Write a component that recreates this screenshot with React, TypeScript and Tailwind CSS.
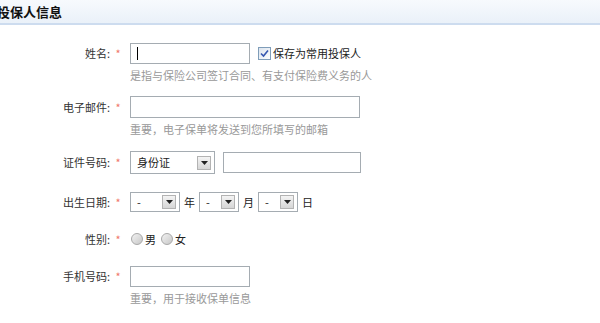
import React from "react";

const font = "font-['SimSun','Noto_Sans_CJK_SC',sans-serif]";

interface RowProps {
    label: string;
    hClass: string;
    hint?: string;
    className?: string;
    children: React.ReactNode;
}

function Row({ label, hClass, hint, className, children }: RowProps) {
    return (
        <div className={`flex ${className ?? ""}`}>
            <div className={`w-[110px] ${hClass} flex items-center justify-end text-[#333]`}>{label}:</div>
            <div className={`w-[16px] ${hClass} flex items-center justify-center text-[#f0776a] text-[11px]`}>*</div>
            <div className="ml-[4px]">
                <div className={`${hClass} flex items-center`}>{children}</div>
                {hint && <div className="mt-[3px] h-[16px] leading-[16px] text-[#999]">{hint}</div>}
            </div>
        </div>
    );
}

function Select({ value, w }: { value: string; w: string }) {
    return (
        <div className={`${w} h-full border border-[#a5acb2] bg-white flex items-center justify-between pl-[6px] pr-[3px]`}>
            <span className="text-[#222]">{value}</span>
            <span className="w-[14px] h-[14px] border border-[#b3b3b3] bg-gradient-to-b from-[#f4f4f4] to-[#d6d6d6] flex items-center justify-center">
                <svg width="7" height="4" viewBox="0 0 7 4">
                    <path d="M0 0h7L3.5 4z" fill="#222" />
                </svg>
            </span>
        </div>
    );
}

function Radio() {
    return (
        <span className="w-[12px] h-[12px] rounded-full border border-[#a8a8a8] bg-gradient-to-br from-[#f2f2f2] to-[#c8c8c8] inline-block" />
    );
}

export default function App() {
    return (
        <div className={`w-[600px] h-[323px] bg-white overflow-hidden text-[11px] ${font}`}>
            {/* Header */}
            <div className="h-[25px] bg-gradient-to-b from-[#f7fafd] to-[#eaf1f9] border-b-2 border-[#cddcef] flex items-center">
                <h2 className="-ml-[3px] text-[13px] font-bold text-[#111]">投保人信息</h2>
            </div>

            <div className="pt-[18px]">
                <Row label="姓名" hClass="h-[21px]" hint="是指与保险公司签订合同、有支付保险费义务的人">
                    <div className="w-[120px] h-full border border-[#a5acb2] bg-white flex items-center pl-[6px]">
                        <span className="w-px h-[13px] bg-black" />
                    </div>
                    <span className="ml-[8px] w-[13px] h-[13px] border border-[#7f9db9] bg-gradient-to-br from-[#dce4ee] to-[#fbfcfd] flex items-center justify-center">
                        <svg width="9" height="9" viewBox="0 0 9 9">
                            <path d="M1 4.5 L3.5 7 L8 1.5" stroke="#3556b0" strokeWidth="1.6" fill="none" />
                        </svg>
                    </span>
                    <span className="ml-[2px] text-[#222]">保存为常用投保人</span>
                </Row>

                <Row label="电子邮件" hClass="h-[22px]" hint="重要，电子保单将发送到您所填写的邮箱" className="mt-[13px]">
                    <div className="w-[230px] h-full border border-[#a5acb2] bg-white" />
                </Row>

                <Row label="证件号码" hClass="h-[23px]" className="mt-[14px]">
                    <Select value="身份证" w="w-[85px]" />
                    <div className="ml-[8px] w-[138px] h-[21px] border border-[#a5acb2] bg-white" />
                </Row>

                <Row label="出生日期" hClass="h-[20px]" className="mt-[18px]">
                    <Select value="-" w="w-[50px]" />
                    <span className="mx-[4px] text-[#222]">年</span>
                    <Select value="-" w="w-[40px]" />
                    <span className="mx-[4px] text-[#222]">月</span>
                    <Select value="-" w="w-[40px]" />
                    <span className="ml-[4px] text-[#222]">日</span>
                </Row>

                <Row label="性别" hClass="h-[20px]" className="mt-[17px]">
                    <span className="ml-[1px] flex items-center"><Radio /></span>
                    <span className="ml-[2px] text-[#222]">男</span>
                    <span className="ml-[5px] flex items-center"><Radio /></span>
                    <span className="ml-[2px] text-[#222]">女</span>
                </Row>

                <Row label="手机号码" hClass="h-[21px]" hint="重要，用于接收保单信息" className="mt-[17px]">
                    <div className="w-[120px] h-full border border-[#a5acb2] bg-white" />
                </Row>
            </div>
        </div>
    );
}
